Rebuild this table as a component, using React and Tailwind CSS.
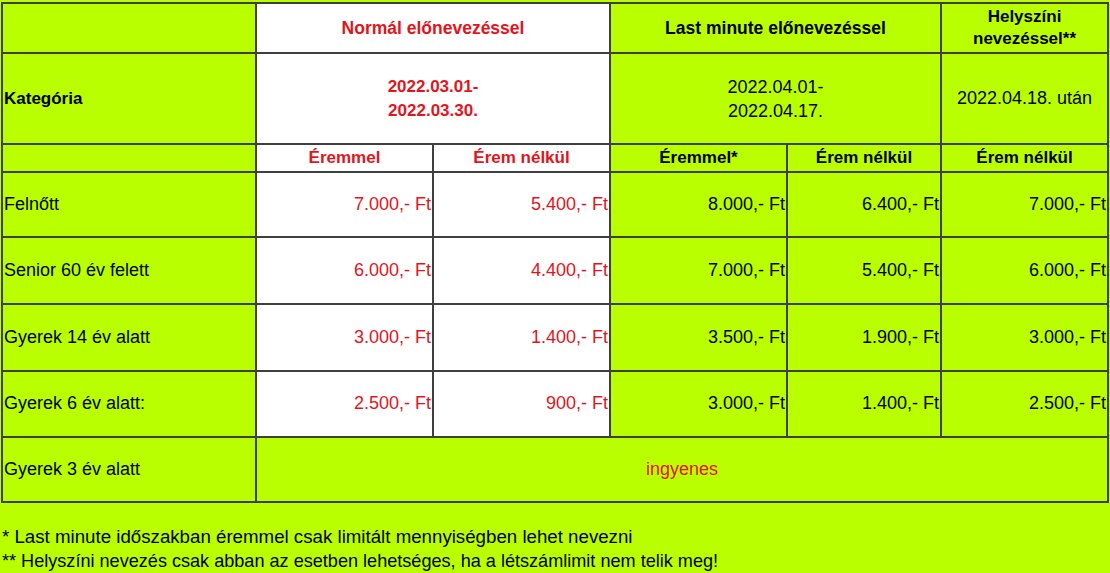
const rows = [
  { name: 'Felnőtt', prices: ['7.000,- Ft', '5.400,- Ft', '8.000,- Ft', '6.400,- Ft', '7.000,- Ft'], h: 'h-[65px]' },
  { name: 'Senior 60 év felett', prices: ['6.000,- Ft', '4.400,- Ft', '7.000,- Ft', '5.400,- Ft', '6.000,- Ft'], h: 'h-[67px]' },
  { name: 'Gyerek 14 év alatt', prices: ['3.000,- Ft', '1.400,- Ft', '3.500,- Ft', '1.900,- Ft', '3.000,- Ft'], h: 'h-[67px]' },
  { name: 'Gyerek 6 év alatt:', prices: ['2.500,- Ft', '900,- Ft', '3.000,- Ft', '1.400,- Ft', '2.500,- Ft'], h: 'h-[66px]' },
];

const cell = 'border-2 border-[#3f3f3f] px-[1px] py-0';
const red = 'text-[#e3141c]';

export default function App() {
  return (
    <div className="min-h-[573px] bg-[#baff00] pt-[2px] pl-[1px] text-[18px] text-black font-['Liberation_Sans',Arial,sans-serif]">
      <table className="w-[1106px] table-fixed border-collapse">
        <colgroup>
          <col className="w-[254px]" />
          <col className="w-[177px]" />
          <col className="w-[177px]" />
          <col className="w-[177px]" />
          <col className="w-[154px]" />
          <col className="w-[167px]" />
        </colgroup>
        <tbody>
          <tr className="h-[50px]">
            <td className={cell}></td>
            <td colSpan={2} className={`${cell} bg-white text-center font-bold text-[17.5px] ${red}`}>
              Normál előnevezéssel
            </td>
            <td colSpan={2} className={`${cell} text-center font-bold text-[17.5px]`}>
              Last minute előnevezéssel
            </td>
            <td className={`${cell} text-center font-bold text-[17px] leading-[22px]`}>
              Helyszíni
              <br />
              nevezéssel**
            </td>
          </tr>
          <tr className="h-[91px]">
            <td className={`${cell} font-bold text-[17px]`}>Kategória</td>
            <td colSpan={2} className={`${cell} bg-white text-center font-bold text-[17px] leading-[24px] ${red}`}>
              2022.03.01-
              <br />
              2022.03.30.
            </td>
            <td colSpan={2} className={`${cell} text-center leading-[24px]`}>
              2022.04.01-
              <br />
              2022.04.17.
            </td>
            <td className={`${cell} text-center`}>2022.04.18. után</td>
          </tr>
          <tr className="h-[27px] text-[17px] font-bold">
            <td className={cell}></td>
            <td className={`${cell} bg-white text-center ${red}`}>Éremmel</td>
            <td className={`${cell} bg-white text-center ${red}`}>Érem nélkül</td>
            <td className={`${cell} text-center`}>Éremmel*</td>
            <td className={`${cell} text-center`}>Érem nélkül</td>
            <td className={`${cell} text-center`}>Érem nélkül</td>
          </tr>
          {rows.map((row) => (
            <tr key={row.name} className={row.h}>
              <td className={cell}>{row.name}</td>
              {row.prices.map((price, i) => (
                <td
                  key={i}
                  className={`${cell} text-right ${i < 2 ? `bg-white ${red}` : ''}`}
                >
                  {price}
                </td>
              ))}
            </tr>
          ))}
          <tr className="h-[65px]">
            <td className={cell}>Gyerek 3 év alatt</td>
            <td colSpan={5} className={`${cell} text-center ${red}`}>
              ingyenes
            </td>
          </tr>
        </tbody>
      </table>
      <div className="mt-[22px] pl-[1px] leading-[24px]">
        <p className="text-[18.7px]">* Last minute időszakban éremmel csak limitált mennyiségben lehet nevezni</p>
        <p className="text-[18.1px]">** Helyszíni nevezés csak abban az esetben lehetséges, ha a létszámlimit nem telik meg!</p>
      </div>
    </div>
  );
}
